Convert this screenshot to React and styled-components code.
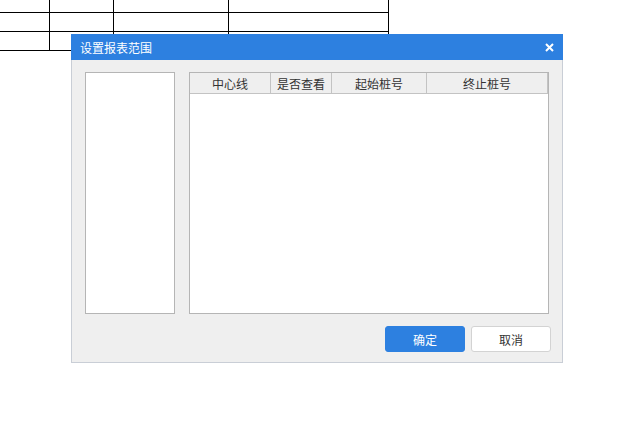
import React from 'react'
import styled, { createGlobalStyle } from 'styled-components'

const GlobalStyle = createGlobalStyle`
  html, body {
    margin: 0;
    padding: 0;
    background: #ffffff;
    font-family: "Noto Sans CJK SC", "Noto Sans", sans-serif;
  }
`

const Page = styled.div`
  position: relative;
  width: 622px;
  height: 424px;
  overflow: hidden;
  background: #ffffff;
`

// sheet behind the dialog
const Sheet = styled.div`
  display: grid;
  grid-template-columns: 50px 64px 115px 160px;
  grid-template-rows: 13px 19px 19px;
`

const SheetCell = styled.div`
  border-right: 1px solid #000;
  border-bottom: 1px solid #000;
  box-sizing: border-box;
`

const Dialog = styled.div`
  position: absolute;
  left: 71px;
  top: 34px;
  width: 492px;
  height: 329px;
  display: flex;
  flex-direction: column;
  box-sizing: border-box;
`

const TitleBar = styled.div`
  height: 26px;
  background: #2d80e0;
  display: flex;
  align-items: center;
  justify-content: space-between;
  padding: 0 9px 0 9px;
  color: #fff;
  font-size: 12px;
`

const CloseBtn = styled.div`
  width: 10px;
  height: 10px;
  display: flex;
  align-items: center;
  justify-content: center;
  cursor: pointer;
`

const Body = styled.div`
  flex: 1;
  background: #efefef;
  border: 1px solid #c9ced6;
  border-top: none;
  padding: 12px 13px 10px 13px;
  display: flex;
  flex-direction: column;
  gap: 12px;
`

const Panels = styled.div`
  display: flex;
  gap: 14px;
  height: 242px;
`

const ListBox = styled.div`
  width: 90px;
  background: #fff;
  border: 1px solid #b5b5b5;
  box-sizing: border-box;
`

const Grid = styled.div`
  width: 360px;
  background: #fff;
  border: 1px solid #b5b5b5;
  box-sizing: border-box;
  display: flex;
  flex-direction: column;
`

const HeaderRow = styled.div`
  display: grid;
  grid-template-columns: 81px 61px 95px 121px;
  height: 21px;
  background: #efefef;
  border-bottom: 1px solid #c3c3c3;
  box-sizing: border-box;
`

const HeaderCell = styled.div`
  border-right: 1px solid #c3c3c3;
  display: flex;
  align-items: center;
  justify-content: center;
  font-size: 12px;
  color: #333;
`

const Footer = styled.div`
  display: flex;
  justify-content: flex-end;
  gap: 6px;
  margin-right: -2px;
`

const Button = styled.button`
  width: 80px;
  height: 26px;
  border-radius: 3px;
  font-family: inherit;
  font-size: 12px;
  cursor: pointer;
  border: 1px solid ${p => (p.primary ? '#2d80e0' : '#d3d3d3')};
  background: ${p => (p.primary ? '#2d80e0' : '#ffffff')};
  color: ${p => (p.primary ? '#ffffff' : '#333333')};
  padding: 0;
`

const columns = ['中心线', '是否查看', '起始桩号', '终止桩号']

export default function App() {
  return (
    <Page>
      <GlobalStyle />
      <Sheet>
        {Array.from({ length: 12 }).map((_, i) => (
          <SheetCell key={i} />
        ))}
      </Sheet>
      <Dialog>
        <TitleBar>
          <span>设置报表范围</span>
          <CloseBtn>
            <svg width="9" height="9" viewBox="0 0 9 9">
              <path d="M1 1 L8 8 M8 1 L1 8" stroke="#fff" strokeWidth="2" />
            </svg>
          </CloseBtn>
        </TitleBar>
        <Body>
          <Panels>
            <ListBox />
            <Grid>
              <HeaderRow>
                {columns.map(c => (
                  <HeaderCell key={c}>{c}</HeaderCell>
                ))}
              </HeaderRow>
            </Grid>
          </Panels>
          <Footer>
            <Button primary>确定</Button>
            <Button>取消</Button>
          </Footer>
        </Body>
      </Dialog>
    </Page>
  )
}
